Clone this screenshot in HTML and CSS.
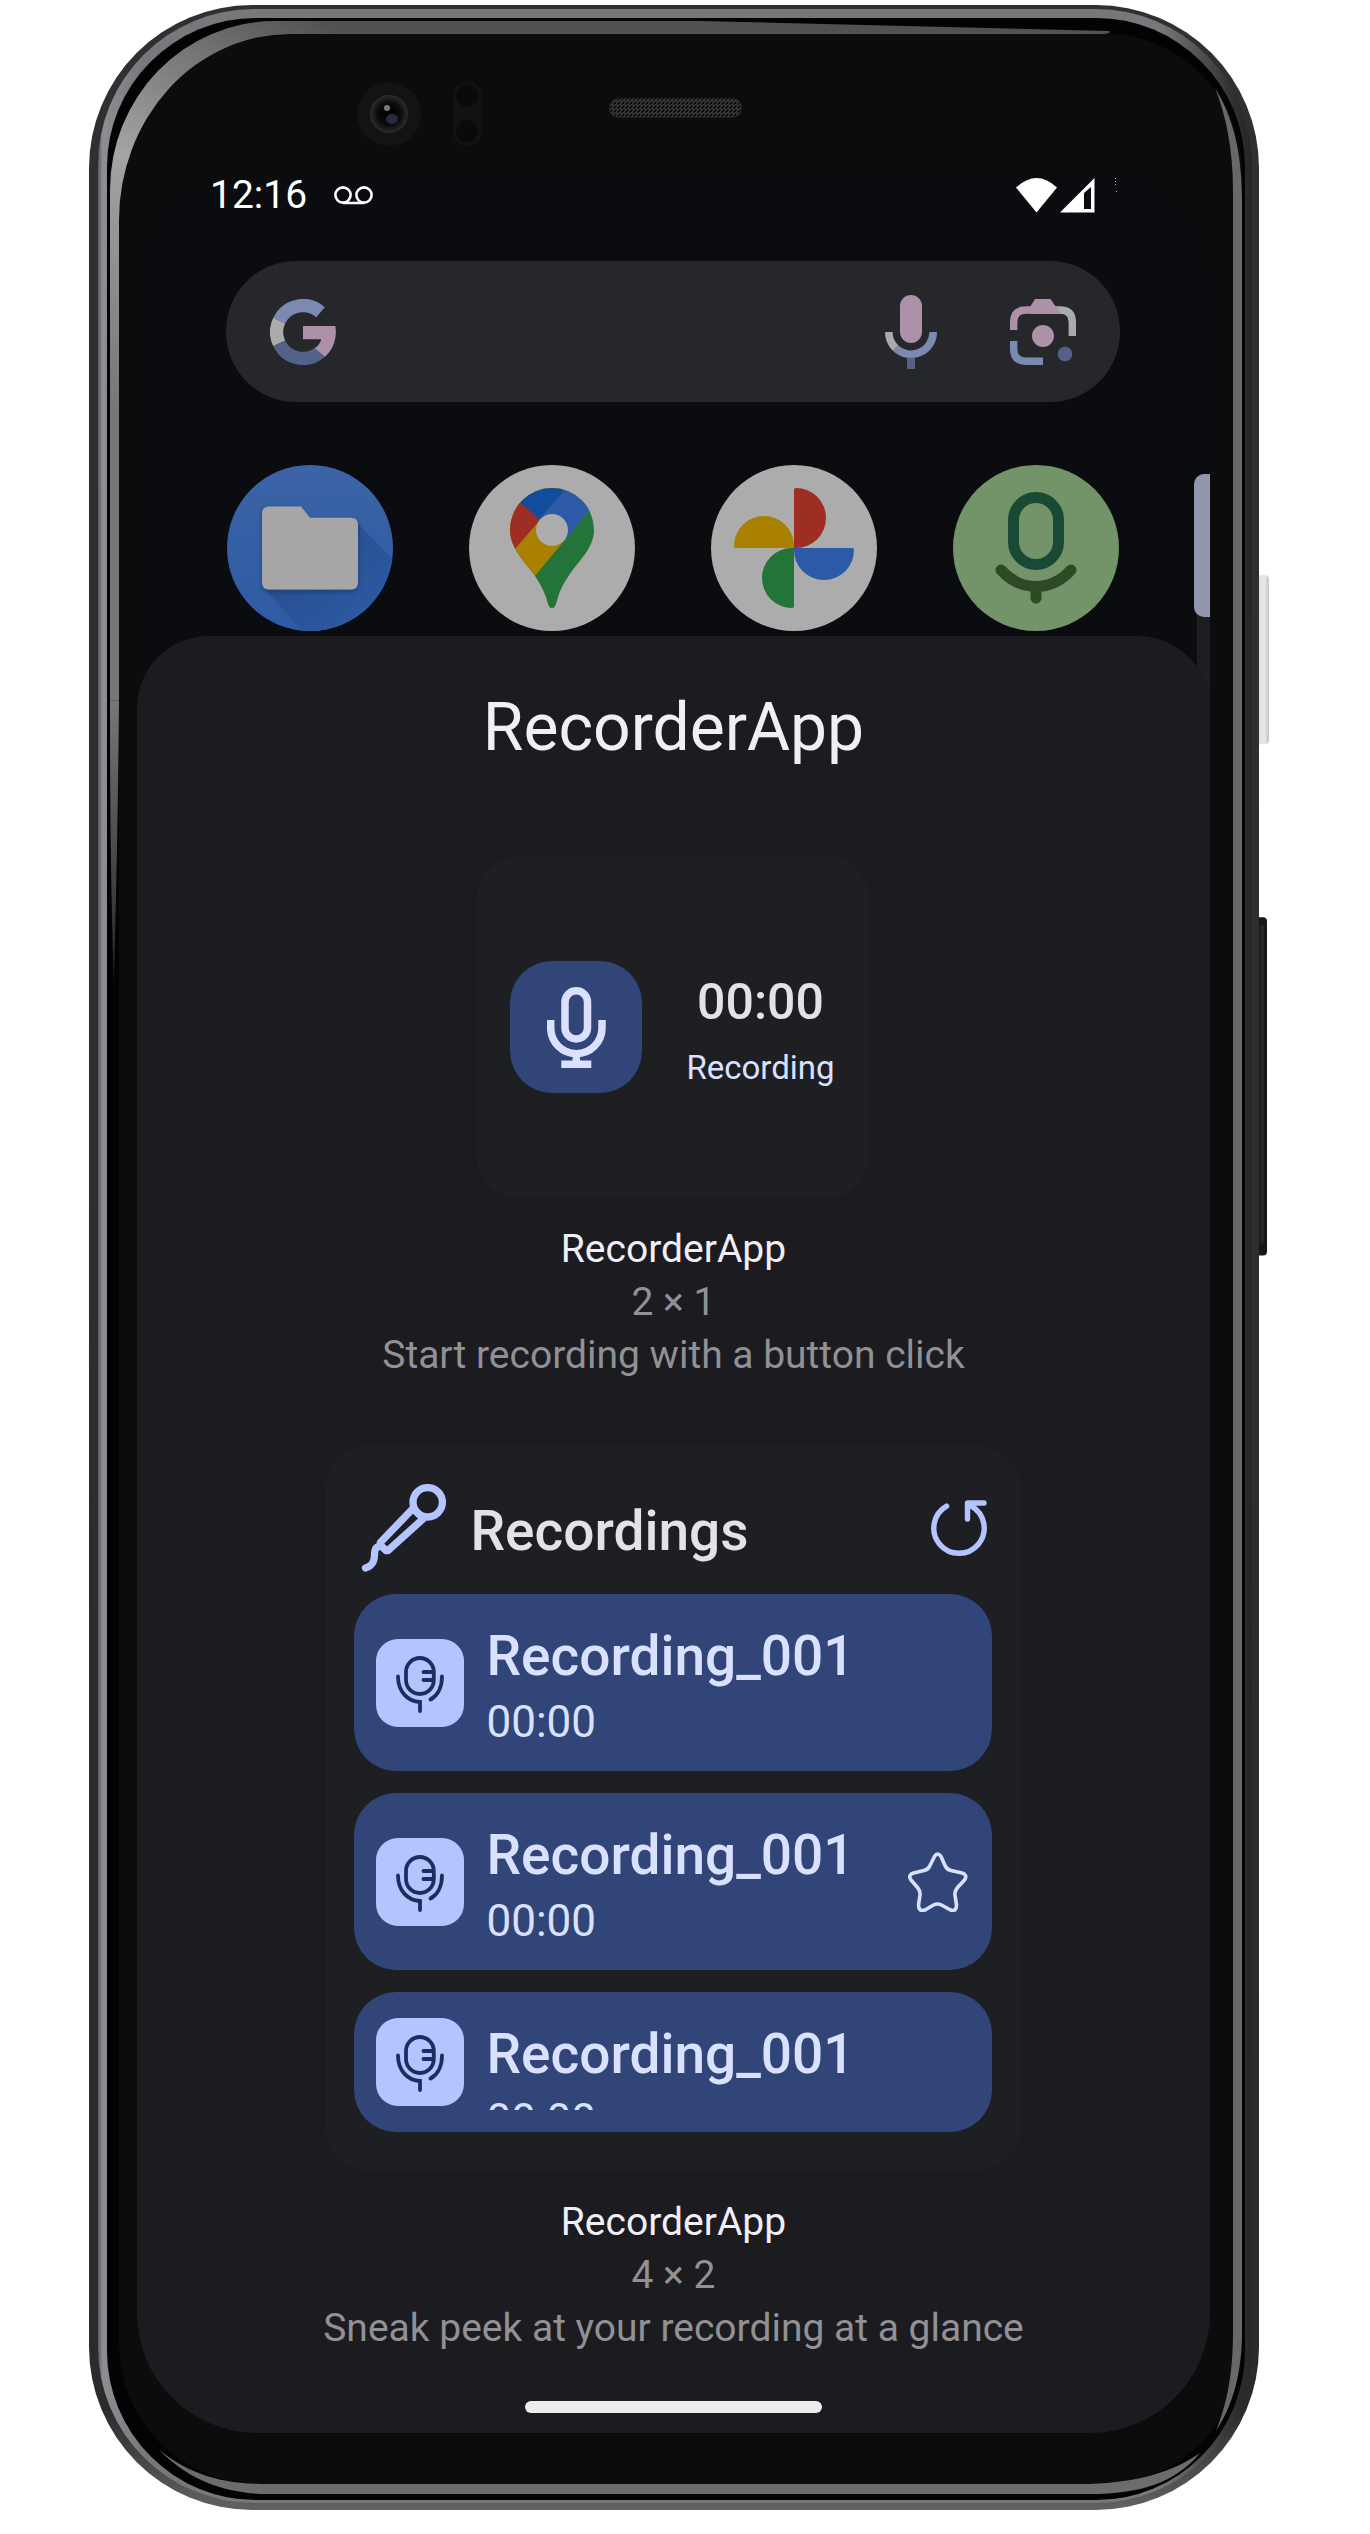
FILE: index.html
```html
<!DOCTYPE html>
<html lang="en">
<head>
<meta charset="utf-8">
<meta name="viewport" content="width=device-width, initial-scale=1">
<title>RecorderApp widgets</title>
<link rel="stylesheet" href="styles.css">
</head>
<body>
<svg class="symbols" aria-hidden="true">
  <symbol id="tile-mic" viewBox="0 0 88 88">
    <g fill="none" stroke="#1b2f5f" stroke-width="3.8" stroke-linecap="round">
      <rect x="30" y="19" width="27.8" height="36" rx="13.9"/>
      <path d="M47.5 33H57M47.5 41H57M22 37.5C22 53 32 62.5 44 63V72M66 37.5C66 49 61 57 54.5 60.5"/>
    </g>
  </symbol>
</svg>
<main class="page">
  <div class="phone">
    <svg class="frame" viewBox="89 5 1170 2504" preserveAspectRatio="none" aria-hidden="true">
      <defs>
        <linearGradient id="shell" x1="0" y1="0" x2="0" y2="1">
          <stop offset="0" stop-color="#2f3030"/><stop offset=".96" stop-color="#2b2b2b"/><stop offset="1" stop-color="#636161"/>
        </linearGradient>
        <linearGradient id="metal" gradientUnits="userSpaceOnUse" x1="98" y1="0" x2="1252" y2="0">
          <stop offset="0" stop-color="#5a5b5f"/><stop offset=".004" stop-color="#8d8e93"/><stop offset=".04" stop-color="#77787c"/><stop offset=".92" stop-color="#77787c"/><stop offset=".985" stop-color="#2e2f30"/><stop offset="1" stop-color="#252626"/>
        </linearGradient>
        <linearGradient id="gleam" gradientUnits="userSpaceOnUse" x1="110" y1="400" x2="330" y2="21">
          <stop offset="0" stop-color="#777"/><stop offset=".5" stop-color="#a3a4a5"/><stop offset="1" stop-color="#515151"/>
        </linearGradient>
        <linearGradient id="taper" x1="0" y1="0" x2="0" y2="1">
          <stop offset="0" stop-color="#777"/><stop offset="1" stop-color="#222"/>
        </linearGradient>
        <linearGradient id="power" x1="0" y1="0" x2="1" y2="0">
          <stop offset="0" stop-color="#dcdcdc"/><stop offset=".7" stop-color="#e6e6e6"/><stop offset="1" stop-color="#c4c4c4"/>
        </linearGradient>
        <pattern id="mesh" width="4" height="4" patternUnits="userSpaceOnUse">
          <rect width="4" height="4" fill="#0a0a0a"/><path d="M0 0L2 2L0 4M4 0L2 2" stroke="#444" stroke-width="1" fill="none"/>
        </pattern>
        <radialGradient id="lens">
          <stop offset="0" stop-color="#000"/><stop offset=".6" stop-color="#0b0b0c"/><stop offset="1" stop-color="#2c2c2d"/>
        </radialGradient>
      </defs>
      <rect x="1255" y="575" width="14" height="169" rx="4" fill="url(#power)"/>
      <rect x="1255" y="917" width="12" height="338" rx="4" fill="#171717"/>
      <rect x="1260" y="925" width="4" height="318" fill="#262626"/>
      <rect x="89" y="5" width="1170" height="2504" rx="163" fill="url(#shell)"/>
      <rect x="98" y="9" width="1154" height="2493" rx="156" fill="url(#metal)"/>
      <rect x="107" y="18" width="1138" height="2481" rx="149" fill="#030303"/>
      <rect x="119" y="33" width="1123" height="2450" rx="140" fill="#0c0c0c"/>
      <path fill="url(#gleam)" d="M110 700V190A165 169 0 0 1 275 21H700L1109 31Q1112 33 1105 34H290A171 186 0 0 0 119 220V700Z"/>
      <path fill="url(#taper)" d="M110 700H119C118 820 116 900 114 985C111 890 110 820 110 700Z"/>
      <path fill="#686868" d="M1215 88C1232 115 1242 150 1242 200V2330C1242 2375 1232 2405 1216 2430C1228 2400 1233 2370 1233 2330V190C1233 150 1226 115 1215 88Z"/>
      <path fill="#6c6c6c" d="M1200 2452C1175 2482 1140 2493 1090 2493H260C215 2490 185 2475 158 2448C185 2470 215 2482 260 2483H1080C1130 2483 1170 2473 1200 2452Z"/>
      <circle cx="389" cy="114" r="32" fill="#131314"/>
      <circle cx="389" cy="114" r="19" fill="url(#lens)"/>
      <ellipse cx="392" cy="119" rx="6" ry="5" fill="#262a44"/>
      <circle cx="387" cy="108" r="3" fill="#77787a"/>
      <rect x="453" y="82" width="29" height="64" rx="14" fill="#121212"/>
      <circle cx="467" cy="96" r="11" fill="#0a0a0d"/>
      <circle cx="467" cy="131" r="11" fill="#0a0a0d"/>
      <rect x="610" y="99" width="131" height="18" rx="8" fill="url(#mesh)" stroke="#2c2c2c"/>
    </svg>

    <div class="screen">
      <header class="status">
        <time>12:16</time>
        <svg class="voicemail" viewBox="0 0 39 19" width="39" height="19" aria-hidden="true" fill="none" stroke="#fff" stroke-width="2.6"><circle cx="9" cy="9" r="7.6"/><circle cx="30" cy="9" r="7.6"/><path d="M9 17H30"/></svg>
        <svg class="wifi" viewBox="0 0 41 35" width="41" height="35" aria-hidden="true"><path fill="#fff" d="M20.5 34.5L0 9.5Q20.5 -9.5 41 9.5Z"/></svg>
        <svg viewBox="0 0 35 35" width="35" height="35" aria-hidden="true"><path fill="#fff" fill-rule="evenodd" d="M0 34.5L34.5 0V34.5ZM24 15V31H31V9Z"/></svg>
        <svg class="dots" viewBox="0 0 3 35" width="3" height="35" aria-hidden="true" fill="#bbb"><path d="M1 0h1v1h-1zM1 3h1v1h-1zM1 6h1v1h-1zM2 13h1v1h-1z"/></svg>
      </header>

      <form class="search">
        <svg viewBox="0 0 66 66" width="66" height="66" aria-hidden="true">
          <g fill="none" stroke-width="13.2">
            <path stroke="#7a8ab0" d="M9.2 21.6A26.4 26.4 0 0 1 50.5 13.2"/>
            <path stroke="#ababab" d="M9.2 44.4A26.4 26.4 0 0 1 9.2 21.6"/>
            <path stroke="#546189" d="M50.5 52.8A26.4 26.4 0 0 1 9.2 44.4"/>
          </g>
          <path fill="#ac91a8" d="M33 27H65.3A33 33 0 0 1 55 57.7L45 49.2Q50 45.5 51.2 40.3H33Z"/>
        </svg>
        <input type="text" aria-label="Search">
        <button type="button" aria-label="Voice search">
          <svg viewBox="0 0 52 74" width="52" height="74" aria-hidden="true">
            <rect x="15" y="0" width="22" height="48" rx="11" fill="#ac91a8"/>
            <g fill="none" stroke-width="7.6"><path stroke="#7a8ab0" d="M10.5 53A22.2 22.2 0 0 0 48.2 37"/><path stroke="#ababab" d="M3.8 37A22.2 22.2 0 0 0 10.5 53"/></g>
            <path fill="#546189" d="M22 62.5H30V74H22Z"/>
          </svg>
        </button>
        <button type="button" aria-label="Lens">
          <svg viewBox="0 0 66 66" width="66" height="66" aria-hidden="true">
            <g fill="none" stroke-width="7.4">
              <path stroke="#ababab" d="M44 11H50Q62.3 11 62.3 23V37"/>
              <path stroke="#ac91a8" d="M3.7 31V23Q3.7 11 16 11H48"/>
              <path stroke="#7a8ab0" d="M3.7 42V50Q3.7 62.3 16 62.3H33"/>
            </g>
            <path fill="#ac91a8" d="M20 8L25 0H40.5L51 15H20Z"/>
            <circle cx="33" cy="37" r="11" fill="#ac91a8"/><circle cx="55" cy="55" r="7.3" fill="#546189"/>
          </svg>
        </button>
      </form>

      <nav class="apps" aria-label="Apps">
        <a href="#files" aria-label="Files"><svg viewBox="0 0 166 166" aria-hidden="true">
          <defs><linearGradient id="files-bg" x1="0" y1="0" x2="0" y2="1"><stop offset="0" stop-color="#3c63a6"/><stop offset="1" stop-color="#2d5ba5"/></linearGradient>
          <linearGradient id="files-shade" x1="0" y1="0" x2="1" y2="1"><stop offset=".3" stop-color="#294f90"/><stop offset=".8" stop-color="#2d5aa3"/></linearGradient>
          <clipPath id="disc"><circle cx="83" cy="83" r="83"/></clipPath>
          <filter id="soft" x="-20%" y="-20%" width="140%" height="140%"><feDropShadow dx="0" dy="2" stdDeviation="2" flood-color="#102a55" flood-opacity=".6"/></filter></defs>
          <circle cx="83" cy="83" r="83" fill="url(#files-bg)"/>
          <path clip-path="url(#disc)" fill="url(#files-shade)" d="M130 58L175 104V175H84L37 123Z"/>
          <path filter="url(#soft)" fill="#a6a6a6" d="M42 41.500H74L83 52.700H124Q131 52.700 131 60V117Q131 124.500 124 124.500H42Q35 124.500 35 117V49Q35 41.500 42 41.500Z"/>
        </svg></a>
        <a href="#maps" aria-label="Maps"><svg viewBox="0 0 166 166" aria-hidden="true">
          <defs><clipPath id="pin"><path d="M83 143C79 143 79 138 77 132C74 124 70 117 66 111C58 99 41 84 41 65A42 42 0 0 1 125 65C125 84 108 97 99 112C93 121 91 126 89 132C87 138 87 143 83 143Z"/></clipPath></defs>
          <circle cx="83" cy="83" r="83" fill="#acacac"/>
          <g clip-path="url(#pin)">
            <path fill="#247338" d="M20 10H140V150H20Z"/>
            <path fill="#a98000" d="M130 34L60 118H20V10H130Z"/>
            <path fill="#2c5aa8" d="M130 34L97 74L69 56L112 5H130Z"/>
            <path fill="#114d9c" d="M69 56L99 21V0H30V19.500Z"/>
            <path fill="#9e2d24" d="M20 10L71 55L46 84L30 103H20Z"/>
          </g>
          <circle cx="83" cy="65" r="16" fill="#acacac"/>
        </svg></a>
        <a href="#photos" aria-label="Photos"><svg viewBox="0 0 166 166" aria-hidden="true">
          <circle cx="83" cy="83" r="83" fill="#acacac"/>
          <path fill="#9e2d24" d="M83 25Q83 23 85 23A30 30 0 0 1 85 83H83Z"/>
          <path fill="#2c5aa8" d="M141 83Q143 83 143 85A30 30 0 0 1 83 85V83Z"/>
          <path fill="#247338" d="M83 141Q83 143 81 143A30 30 0 0 1 81 83H83Z"/>
          <path fill="#a98000" d="M25 83Q23 83 23 81A30 30 0 0 1 83 81V83Z"/>
        </svg></a>
        <a href="#recorder" aria-label="RecorderApp"><svg viewBox="0 0 166 166" aria-hidden="true">
          <circle cx="83" cy="83" r="83" fill="#739368"/>
          <g fill="none" stroke-width="11" stroke-linecap="round"><rect x="60.500" y="32.500" width="45" height="67" rx="22.500" stroke="#1a4a36"/><path stroke="#2d4a27" d="M48 105C58 116 70 121.500 83 121.500S108 116 118 105M83 122V133"/></g>
        </svg></a>
        <span class="scrolltrack"></span>
        <span class="scrollbar"></span>
      </nav>

      <section class="sheet">
        <h1>RecorderApp</h1>

        <article class="widget">
          <div class="card card-small">
            <button class="record" type="button" aria-label="Record">
              <svg viewBox="0 0 59 81" width="59" height="81" aria-hidden="true">
                <g fill="none" stroke="#dae1ff" stroke-width="7.500"><rect x="18" y="3.800" width="22.500" height="48.200" rx="11.200"/><path d="M3.700 33V41A25.600 25.600 0 0 0 55 41V33M29.300 66V76M14.300 77.300H44.300"/></g>
              </svg>
            </button>
            <div class="counter"><strong>00:00</strong><span>Recording</span></div>
          </div>
          <p class="name">RecorderApp</p>
          <p>2 × 1</p>
          <p>Start recording with a button click</p>
        </article>

        <article class="widget">
          <div class="card card-large">
            <div class="card-head">
              <svg viewBox="0 0 88 88" width="88" height="88" aria-hidden="true">
                <g fill="none" stroke="#b3c4ff" stroke-width="7.300" stroke-linecap="round" stroke-linejoin="round"><circle cx="67.700" cy="18.300" r="14.700"/><path d="M53 24.500L20.300 58.500V61L26 66.500H28L63.500 34.500ZM19.500 62C12 65 16 71 13.500 77C12 81 9 83 5.500 84"/></g>
              </svg>
              <h2>Recordings</h2>
              <button type="button" aria-label="Refresh">
                <svg viewBox="0 0 56 56" width="56" height="56" aria-hidden="true"><path fill="none" stroke="#b3c4ff" stroke-width="5.400" stroke-linecap="round" stroke-linejoin="round" d="M15.600 6.100A25.200 25.200 0 1 0 40.400 6.100M53 3H36.500V19"/></svg>
              </button>
            </div>
            <ul class="recordings">
              <li>
                <svg class="tile" aria-hidden="true"><use href="#tile-mic"/></svg>
                <div class="info"><strong>Recording_001</strong><span>00:00</span></div>
              </li>
              <li>
                <svg class="tile" aria-hidden="true"><use href="#tile-mic"/></svg>
                <div class="info"><strong>Recording_001</strong><span>00:00</span></div>
                <button type="button" aria-label="Favourite">
                  <svg viewBox="0 0 60 60" width="60" height="60" aria-hidden="true"><path fill="none" stroke="#dae1ff" stroke-width="3.600" stroke-linejoin="round" d="M26.500 4.500Q29.500 -.5 33 4.500L37 13.500Q38.500 17.500 43 18.500L54 21Q60 23 56.500 28L49.500 35.500Q46.500 39 47 43L48.500 53Q48.500 60 42.500 58L33.500 53Q29.500 51 25.500 53L17 58Q10.500 60 10.500 53L12 43Q12.500 39 9.500 35.500L3 28Q-.5 23 5.500 21L16 18.500Q20.500 17.500 22 13.500Z"/></svg>
                </button>
              </li>
              <li class="cut">
                <svg class="tile" aria-hidden="true"><use href="#tile-mic"/></svg>
                <div class="info"><strong>Recording_001</strong><span>00:00</span></div>
              </li>
            </ul>
          </div>
          <p class="name">RecorderApp</p>
          <p>4 × 2</p>
          <p>Sneak peek at your recording at a glance</p>
        </article>

        <div class="home-bar"></div>
      </section>
    </div>
  </div>
</main>
</body>
</html>
```
FILE: styles.css
```css
* {
  box-sizing: border-box;
}

body {
  margin: 0;
  background: #fff;
  color: #f0eff7;
  font-family: Roboto, "Liberation Sans", sans-serif;
  font-size: 39px;
  line-height: 53px;
}

h1,
h2,
p,
ul {
  margin: 0;
  padding: 0;
}

button {
  display: flex;
  align-items: center;
  justify-content: center;
  padding: 0;
  border: 0;
  background: none;
}

.symbols {
  display: none;
}

.page {
  padding: 5px 111px 25px 89px;
}

/* Handset */
.phone {
  position: relative;
  padding: 164px 49px 77px 48px;
}

.frame {
  position: absolute;
  inset: 0;
  width: 100%;
  height: 100%;
  overflow: visible;
}

.screen {
  position: relative;
  overflow: hidden;
  border-radius: 120px;
  background: #0b0c10;
}

/* Status bar */
.status {
  display: flex;
  align-items: center;
  height: 92px;
  padding: 0 93px 40px 73px;
  color: #fff;
}

.voicemail {
  margin-left: 27px;
}

.wifi {
  margin-left: auto;
  margin-right: 3px;
}

.dots {
  margin-left: 19px;
}

/* Search */
.search {
  display: flex;
  align-items: center;
  height: 141px;
  margin: 0 90px 0 89px;
  padding: 0 44px;
  border-radius: 70px;
  background: #26272b;
}

.search input {
  flex: 1;
  min-width: 0;
  border: 0;
  outline: 0;
  background: none;
  color: inherit;
  font: inherit;
}

.search button + button {
  margin-left: 73px;
}

/* Launcher row */
.apps {
  position: relative;
  display: flex;
  justify-content: space-between;
  margin-top: 63px;
  padding: 0 91px 0 90px;
}

.apps a,
.apps svg {
  display: block;
  width: 166px;
  height: 166px;
}

.scrollbar {
  position: absolute;
  top: 9px;
  right: -10px;
  width: 26px;
  height: 143px;
  border-radius: 10px;
  background: #9297ad;
}

.scrolltrack {
  position: absolute;
  top: 142px;
  right: 0;
  width: 13px;
  height: 100px;
  background: #1d1e22;
}

/* Widget sheet */
.sheet {
  position: relative;
  display: flex;
  flex-direction: column;
  align-items: center;
  margin-top: 5px;
  padding: 52px 20px 20px;
  border-radius: 72px 72px 0 0;
  background: #1b1b20;
}

h1 {
  font-size: 66px;
  font-weight: 400;
  line-height: 80px;
  margin-bottom: 88px;
}

.widget {
  display: flex;
  flex-direction: column;
  align-items: center;
  max-width: 100%;
  margin-bottom: 63px;
  color: #919195;
  text-align: center;
}

.widget:last-of-type {
  margin-bottom: 46px;
}

.name {
  color: #f0eff7;
}

.card {
  max-width: 100%;
  margin-bottom: 25px;
  border-radius: 42px;
  background: #1e1f23;
  color: #dae1ff;
}

.card-small {
  display: flex;
  align-items: center;
  gap: 40px;
  width: 392px;
  padding: 105px 31px 105px 33px;
}

.record {
  flex: none;
  width: 132px;
  height: 132px;
  border-radius: 42px;
  background: #314578;
}

.counter {
  display: flex;
  flex: 1;
  flex-direction: column;
  gap: 14px;
  padding-top: 4px;
  font-size: 33px;
  line-height: 40px;
}

.counter strong {
  color: #e3e2e6;
  font-size: 50px;
  font-weight: 500;
  line-height: 64px;
}

.card-large {
  width: 694px;
  padding: 39px 28px;
  text-align: left;
}

.card-head {
  display: flex;
  align-items: center;
  gap: 22px;
  margin-bottom: 22px;
  padding: 0 5px 0 6px;
}

h2 {
  flex: 1;
  padding-top: 6px;
  color: #e3e2e6;
  font-size: 55px;
  font-weight: 500;
  line-height: 64px;
}

.recordings {
  display: flex;
  flex-direction: column;
  gap: 22px;
  list-style: none;
}

.recordings li {
  display: flex;
  align-items: center;
  gap: 22px;
  height: 177px;
  padding: 22px 24px 22px 22px;
  border-radius: 42px;
  background: #314578;
}

.recordings .cut {
  height: 140px;
}

.tile {
  flex: none;
  width: 88px;
  height: 88px;
  border-radius: 22px;
  background: #b3c4ff;
}

.info {
  display: flex;
  flex: 1;
  flex-direction: column;
  align-self: stretch;
  overflow: hidden;
}

.info strong {
  flex: none;
  font-size: 55px;
  font-weight: 500;
  line-height: 80px;
}

.info span {
  flex: none;
  font-size: 44px;
  line-height: 52px;
}

.home-bar {
  width: 297px;
  height: 12px;
  border-radius: 6px;
  background: #ededed;
}
```
